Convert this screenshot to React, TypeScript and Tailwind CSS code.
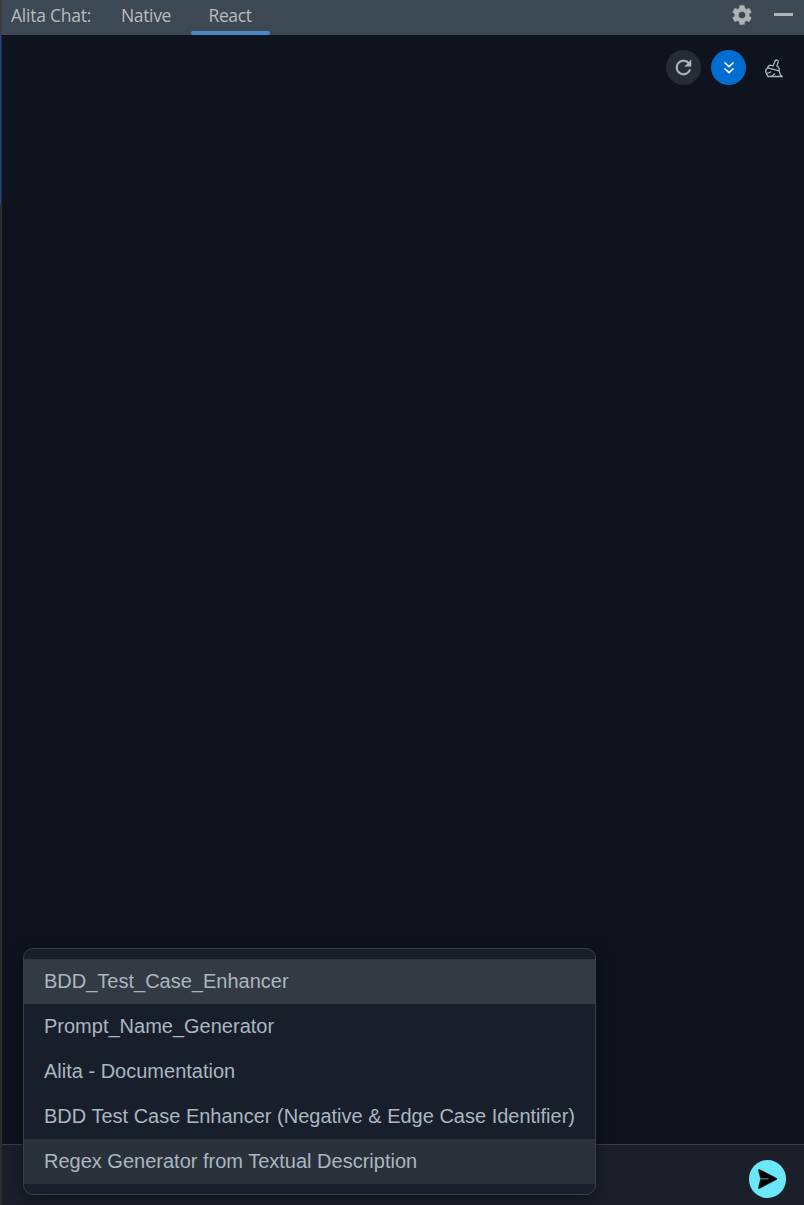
const prompts = [
  { name: 'BDD_Test_Case_Enhancer', tone: 'bg-[#343a43]' },
  { name: 'Prompt_Name_Generator', tone: '' },
  { name: 'Alita - Documentation', tone: '' },
  { name: 'BDD Test Case Enhancer (Negative & Edge Case Identifier)', tone: '' },
  { name: 'Regex Generator from Textual Description', tone: 'bg-[#2b313a]' },
];

function GearIcon() {
  return (
    <svg width="24" height="24" viewBox="0 0 24 24" fill="#afb1b3" stroke="#afb1b3" strokeWidth="0.4">
      <path d="M19.14 12.94c.04-.3.06-.61.06-.94 0-.32-.02-.64-.07-.94l2.03-1.58a.49.49 0 0 0 .12-.61l-1.92-3.32a.488.488 0 0 0-.59-.22l-2.39.96c-.5-.38-1.03-.7-1.62-.94l-.36-2.54a.484.484 0 0 0-.48-.41h-3.84c-.24 0-.43.17-.47.41l-.36 2.54c-.59.24-1.13.57-1.62.94l-2.39-.96c-.22-.08-.47 0-.59.22L2.74 8.87c-.12.21-.08.47.12.61l2.03 1.58c-.05.3-.09.63-.09.94s.02.64.07.94l-2.03 1.58a.49.49 0 0 0-.12.61l1.92 3.32c.12.22.37.29.59.22l2.39-.96c.5.38 1.03.7 1.62.94l.36 2.54c.05.24.24.41.48.41h3.84c.24 0 .44-.17.47-.41l.36-2.54c.59-.24 1.13-.56 1.62-.94l2.39.96c.22.08.47 0 .59-.22l1.92-3.32c.12-.22.07-.47-.12-.61l-2.01-1.58zM12 15.6c-1.98 0-3.6-1.62-3.6-3.6s1.62-3.6 3.6-3.6 3.6 1.62 3.6 3.6-1.62 3.6-3.6 3.6z" />
    </svg>
  );
}

function RefreshIcon() {
  return (
    <svg width="23" height="23" viewBox="0 0 24 24" fill="#a9b7c1" stroke="#a9b7c1" strokeWidth="0.2">
      <path d="M17.65 6.35C16.2 4.9 14.21 4 12 4c-4.42 0-7.99 3.58-7.99 8s3.57 8 7.99 8c3.73 0 6.84-2.55 7.73-6h-2.08c-.82 2.33-3.04 4-5.65 4-3.31 0-6-2.69-6-6s2.69-6 6-6c1.66 0 3.14.69 4.22 1.78L13 11h7V4l-2.35 2.35z" />
    </svg>
  );
}

function ChevronsIcon() {
  return (
    <svg width="12" height="14" viewBox="0 0 12 14" fill="none" stroke="#fff" strokeWidth="1.7">
      <path d="M1.5 1.5 6 5.7l4.5-4.2M1.5 7.5 6 11.7l4.5-4.2" />
    </svg>
  );
}

function BroomIcon() {
  return (
    <svg width="20" height="20" viewBox="0 0 20 20" fill="none" stroke="#a9b7c1" strokeWidth="1.3" strokeLinecap="round" strokeLinejoin="round">
      <path d="M3.6 9.8 4.6 8.2C5.2 7.4 6.2 7.1 7.1 7.4L9.2 7.8 11.1 3C11.8 1.2 14.7 2 14.2 3.9L12.9 7.9 14.3 9C15.3 9.9 15.5 11.3 15.1 12.8" />
      <path d="M3.6 9.8 15.1 12.8C15.5 15.3 16.4 17.2 18.2 18.5H4.2C2 16.1 1.4 13.6 1.9 11.5 2.8 11.2 3.3 10.6 3.6 9.8" />
      <path d="M3.4 15.2C4.8 15.2 5.9 14.8 6.8 13.9M8 18.3C9.1 17.7 9.8 16.9 10.3 15.9" />
    </svg>
  );
}

function SendIcon() {
  return (
    <svg width="20" height="20" viewBox="0 0 20 20">
      <path d="M1.5.5C.8.2.3.6.5 1.3L2.5 9.2H10.5v1.2H2.5L.5 18.6c-.2.8.3 1.1 1 .8L18.5 10.6c.7-.4.7-1 0-1.4Z" fill="#000" stroke="#000" strokeWidth="0.5" />
    </svg>
  );
}

export default function App() {
  return (
    <div className="relative flex h-[1205px] w-[804px] flex-col overflow-hidden bg-[#0e131d]">
      <header className="flex h-[35px] shrink-0 border-l-2 border-[#3a3d40] bg-[#3d4855] font-['Open_Sans',sans-serif] text-[17.5px] leading-[30px] text-[#bbbbbb]">
        <span className="ml-[9px] w-[92px] tracking-[-0.25px] whitespace-nowrap">Alita Chat:</span>
        <button className="flex h-[30px] w-[87px] justify-center pr-[5px] pl-[4px] tracking-[-0.35px]">Native</button>
        <button className="relative flex h-[35px] w-[80px] justify-center tracking-[-0.4px]">
          <span className="h-[35px]">React</span>
          <span className="absolute bottom-0 left-px h-1 w-[79px] rounded-[2px] bg-[#4a88c7]" />
        </button>
        <div className="ml-auto flex gap-[20px] pr-[11px]">
          <button aria-label="Settings" className="flex h-[29px] items-center"><GearIcon /></button>
          <button aria-label="Minimize" className="flex h-[29px] items-center"><span className="h-[3px] w-[19px] bg-[#afb1b3]" /></button>
        </div>
      </header>

      <div className="flex min-h-0 flex-1">
        <div className="flex w-0.5 flex-col bg-[#2b2d2e]">
          <div className="h-[169px] border-r border-[#1b2c4f] bg-[#214283]" />
        </div>
        <main className="flex flex-1 flex-col">
          <div className="flex flex-1 items-start justify-end gap-[10px] pt-[15px] pr-[13px]">
            <button aria-label="Refresh" className="flex size-[35px] items-center justify-center rounded-full bg-[#262b34]"><RefreshIcon /></button>
            <button aria-label="Scroll to bottom" className="flex size-[35px] items-center justify-center rounded-full bg-[#006dd1]"><ChevronsIcon /></button>
            <button aria-label="Clear chat" className="flex size-[35px] items-center justify-center"><BroomIcon /></button>
          </div>
          <footer className="flex h-[61px] items-start justify-end border-t border-[#3b3e46] bg-[#1a1f2a] pt-[15px] pr-[18px]">
            <button aria-label="Send" className="flex h-[38px] w-[37px] items-center justify-center rounded-full bg-[#6ae8fa] pl-px"><SendIcon /></button>
          </footer>
        </main>
      </div>

      <ul className="absolute top-[948px] left-[23px] w-[573px] rounded-[10px] border border-[#3b3e46] bg-[#181f2a] py-[10px] shadow-[0_4px_16px_rgba(0,0,0,0.4)]">
        {prompts.map((prompt) => (
          <li key={prompt.name} className={`flex h-[45px] items-center px-5 pb-0.5 font-['Liberation_Sans',Arial,sans-serif] text-[20px] leading-[30px] whitespace-nowrap text-[#a9b7c1] ${prompt.tone}`}>
            {prompt.name}
          </li>
        ))}
      </ul>
    </div>
  );
}
